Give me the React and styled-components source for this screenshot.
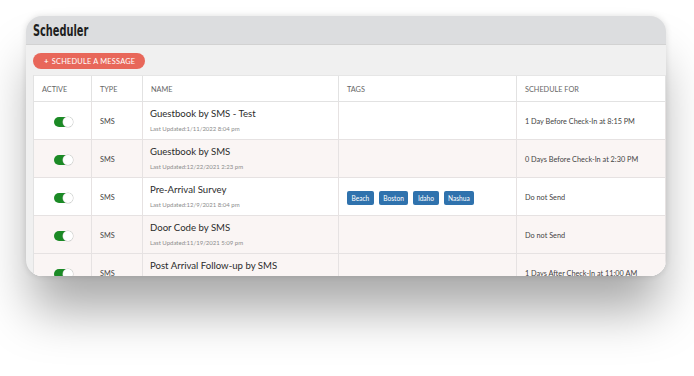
import React from 'react';
import styled, { createGlobalStyle } from 'styled-components';

const GlobalStyle = createGlobalStyle`
  html, body {
    margin: 0;
    padding: 0;
    background: #ffffff;
  }
  body {
    font-family: Lato, 'Liberation Sans', sans-serif;
  }
`;

const messages = [
  {
    name: 'Guestbook by SMS - Test',
    updated: '1/11/2022 8:04 pm',
    tags: [],
    schedule: '1 Day Before Check-In at 8:15 PM',
    tinted: false,
  },
  {
    name: 'Guestbook by SMS',
    updated: '12/22/2021 2:23 pm',
    tags: [],
    schedule: '0 Days Before Check-In at 2:30 PM',
    tinted: true,
  },
  {
    name: 'Pre-Arrival Survey',
    updated: '12/9/2021 8:04 pm',
    tags: ['Beach', 'Boston', 'Idaho', 'Nashua'],
    schedule: 'Do not Send',
    tinted: false,
  },
  {
    name: 'Door Code by SMS',
    updated: '11/19/2021 5:09 pm',
    tags: [],
    schedule: 'Do not Send',
    tinted: true,
  },
  {
    name: 'Post Arrival Follow-up by SMS',
    updated: '11/19/2021 5:09 pm',
    tags: [],
    schedule: '1 Days After Check-In at 11:00 AM',
    tinted: true,
  },
];

const Scheduler = () => (
  <Page>
    <Card>
      <TitleBar>
        <Title>Scheduler</Title>
      </TitleBar>
      <Body>
        <Toolbar>
          <AddButton>
            <Plus>+</Plus> Schedule a message
          </AddButton>
        </Toolbar>
        <Table>
          <HeadRow>
            <HeadCell>Active</HeadCell>
            <HeadCell>Type</HeadCell>
            <HeadCell>Name</HeadCell>
            <HeadCell>Tags</HeadCell>
            <HeadCell>Schedule For</HeadCell>
          </HeadRow>
          {messages.map((m) => (
            <Row key={m.name} $tinted={m.tinted}>
              <Cell $center>
                <Toggle>
                  <Knob />
                </Toggle>
              </Cell>
              <Cell>
                <Small>SMS</Small>
              </Cell>
              <NameCell>
                <Name>{m.name}</Name>
                <Updated>Last Updated:{m.updated}</Updated>
              </NameCell>
              <Cell>
                <Tags>
                  {m.tags.map((t) => (
                    <Tag key={t}>{t}</Tag>
                  ))}
                </Tags>
              </Cell>
              <Cell>
                <Small>{m.schedule}</Small>
              </Cell>
            </Row>
          ))}
        </Table>
      </Body>
    </Card>
  </Page>
);

export default function App() {
  return (
    <>
      <GlobalStyle />
      <Scheduler />
    </>
  );
}

const Page = styled.div`
  width: 694px;
  height: 376px;
  padding: 16px 0 0 26px;
  box-sizing: border-box;
  overflow: hidden;
`;

const Card = styled.div`
  width: 640px;
  height: 260px;
  border-radius: 16px;
  overflow: hidden;
  background: #f0f0f0;
  display: flex;
  flex-direction: column;
  box-shadow: 0 0 6px rgba(0, 0, 0, 0.12), 0 40px 50px -6px rgba(0, 0, 0, 0.34);
`;

const TitleBar = styled.div`
  height: 29px;
  flex-shrink: 0;
  background: #dcdddf;
  border-bottom: 1px solid #d2d2d2;
  box-sizing: border-box;
  display: flex;
  align-items: center;
  padding-left: 7px;
`;

// no Oswald offline, so squeeze a condensed bold face to its width
const Title = styled.h1`
  margin: 0;
  font-family: 'DejaVu Sans Condensed', 'Liberation Sans', sans-serif;
  font-weight: 700;
  font-size: 16.5px;
  color: #1e1e1e;
  transform: scaleX(0.66);
  transform-origin: left center;
`;

const Body = styled.div`
  flex: 1;
  padding-left: 7px;
  display: flex;
  flex-direction: column;
`;

const Toolbar = styled.div`
  height: 30px;
  flex-shrink: 0;
  display: flex;
  align-items: flex-start;
  padding-top: 8px;
  box-sizing: border-box;
`;

const AddButton = styled.button`
  height: 16px;
  width: 112px;
  border: none;
  border-radius: 8px;
  background: #e8675a;
  color: #ffffff;
  font-family: Lato, sans-serif;
  font-size: 7.4px;
  letter-spacing: 0.2px;
  text-transform: uppercase;
  padding: 0 0 0 11px;
  display: flex;
  align-items: center;
  gap: 3px;
  white-space: nowrap;
`;

const Plus = styled.span`
  font-weight: 700;
  font-size: 8px;
`;

const Table = styled.div`
  background: #ffffff;
  border-left: 1px solid #e2e2e2;
  display: flex;
  flex-direction: column;
`;

const columns = '58px 51px 196px 178px 1fr';

const HeadRow = styled.div`
  display: grid;
  grid-template-columns: ${columns};
  height: 27px;
  border-bottom: 1px solid #e2e2e2;
  box-sizing: border-box;
  border-top: 1px solid #e6e6e6;
`;

const HeadCell = styled.div`
  border-right: 1px solid #e2e2e2;
  display: flex;
  align-items: center;
  padding: 1px 0 0 8px;
  font-size: 7.3px;
  color: #666666;
  text-transform: uppercase;
`;

const Row = styled.div`
  display: grid;
  grid-template-columns: ${columns};
  height: 38px;
  flex-shrink: 0;
  box-sizing: border-box;
  border-bottom: 1px solid #e6e2e2;
  background: ${(p) => (p.$tinted ? '#faf5f4' : '#ffffff')};
`;

const Cell = styled.div`
  border-right: 1px solid #e6e2e2;
  display: flex;
  align-items: center;
  justify-content: ${(p) => (p.$center ? 'center' : 'flex-start')};
  padding: 2px 0 0 ${(p) => (p.$center ? '0' : '8px')};
`;

const NameCell = styled.div`
  border-right: 1px solid #e6e2e2;
  padding: 5px 0 0 7px;
  display: flex;
  flex-direction: column;
  gap: 5px;
`;

const Name = styled.div`
  font-size: 9.6px;
  line-height: 13px;
  color: #2b2b2b;
`;

const Updated = styled.div`
  font-size: 6px;
  color: #8c8c8c;
`;

const Small = styled.span`
  font-size: 7.3px;
  color: #444444;
`;

const Toggle = styled.div`
  width: 19px;
  height: 10px;
  border-radius: 5px;
  background: #1b8a25;
  position: relative;
  margin-left: 1px;
`;

const Knob = styled.div`
  position: absolute;
  right: 0;
  top: 0;
  width: 10px;
  height: 10px;
  border-radius: 50%;
  background: #ffffff;
  box-shadow: 0 0 0 0.5px #c9c9c9;
  box-sizing: border-box;
`;

const Tags = styled.div`
  display: flex;
  gap: 5px;
`;

const Tag = styled.span`
  background: #2f72ad;
  color: #ffffff;
  font-size: 6.6px;
  height: 14px;
  padding: 0 4.5px;
  border-radius: 2px;
  display: flex;
  align-items: center;
`;
